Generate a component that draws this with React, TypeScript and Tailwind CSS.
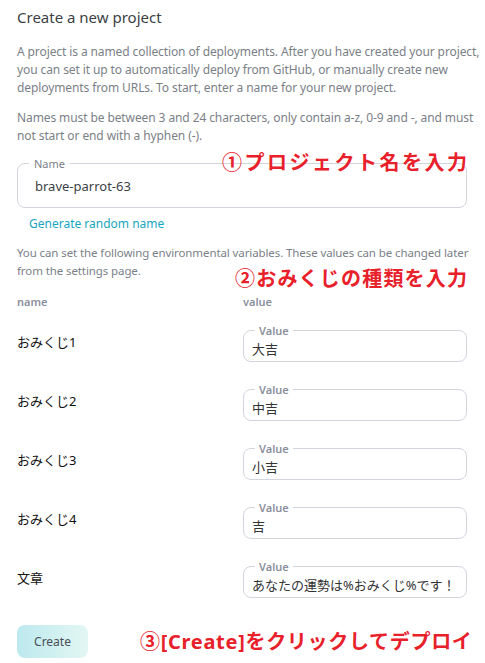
import React from "react";

const rows = [
  { name: "おみくじ1", value: "大吉" },
  { name: "おみくじ2", value: "中吉" },
  { name: "おみくじ3", value: "小吉" },
  { name: "おみくじ4", value: "吉" },
  { name: "文章", value: "あなたの運勢は%おみくじ%です！" },
];

const font = {
  fontFamily: '"Noto Sans", "Noto Sans CJK JP", sans-serif',
};

function ValueField({ value }: { value: string }) {
  return (
    <fieldset className="border border-[#d3d5dc] rounded-lg pb-[2px] min-w-0">
      <legend className="ml-[11px] px-[4px] text-[11px] leading-[13px] font-semibold text-[#8b909c]">
        Value
      </legend>
      <div className="mt-[2px] pl-[8px] text-[13px] leading-[20px] text-[#333]">{value}</div>
    </fieldset>
  );
}

export default function App() {
  return (
    <div className="relative w-[485px] h-[663px] bg-white overflow-hidden" style={font}>
      <div className="pl-[17px] pr-[4px] pt-[7px]">
        <h1 className="text-[15px] leading-[20px] text-[#3c3f46]">Create a new project</h1>

        <p className="mt-[16px] text-[12px] leading-[18px] tracking-[-0.1px] text-[#7b7f87] whitespace-nowrap">
          A project is a named collection of deployments. After you have created your project,
          <br />
          you can set it up to automatically deploy from GitHub, or manually create new
          <br />
          deployments from URLs. To start, enter a name for your new project.
        </p>

        <p className="mt-[12px] text-[12px] leading-[18px] tracking-[-0.1px] text-[#7b7f87] whitespace-nowrap">
          Names must be between 3 and 24 characters, only contain a-z, 0-9 and -, and must
          <br />
          not start or end with a hyphen (-).
        </p>

        <fieldset className="mt-[12px] w-[450px] border border-[#d3d5dc] rounded-lg pb-[11px]">
          <legend className="ml-[11px] px-[5px] text-[11px] leading-[13px] text-[#7b7f87]">Name</legend>
          <div className="mt-[6px] pl-[17px] text-[13px] leading-[20px] text-[#3c3f46]">brave-parrot-63</div>
        </fieldset>

        <button className="mt-[7px] ml-[12px] block text-[12px] leading-[18px] text-[#17a6c0]">
          Generate random name
        </button>

        <p className="mt-[11px] text-[11.5px] leading-[18px] tracking-[-0.1px] text-[#7b7f87] whitespace-nowrap">
          You can set the following environmental variables. These values can be changed later
          <br />
          from the settings page.
        </p>

        <div className="mt-[15px] grid grid-cols-[226px_224px] text-[11px] leading-[14px] font-semibold text-[#8b909c]">
          <div>name</div>
          <div>value</div>
        </div>

        <div className="mt-[15px] flex flex-col gap-[21px] w-[450px]">
          {rows.map((r) => (
            <div key={r.name} className="grid grid-cols-[226px_224px] items-center">
              <div className="text-[13px] text-[#111]">{r.name}</div>
              <ValueField value={r.value} />
            </div>
          ))}
        </div>

        <button className="mt-[27px] w-[71px] h-[33px] rounded-lg bg-gradient-to-r from-[#bde9ee] to-[#e2f7f3] text-[12px] text-[#4a4f57]">
          Create
        </button>
      </div>

      <div className="absolute left-[222px] top-[151px] whitespace-nowrap text-[20px] leading-[24px] font-bold tracking-[2.5px] text-[#e8202a]">
        ①プロジェクト名を入力
      </div>
      <div className="absolute left-[235px] top-[267px] whitespace-nowrap text-[20px] leading-[24px] font-bold tracking-[1.2px] text-[#e8202a]">
        ②おみくじの種類を入力
      </div>
      <div className="absolute left-[140px] top-[630px] whitespace-nowrap text-[20px] leading-[24px] font-bold tracking-[0.7px] text-[#e8202a]">
        ③[Create]をクリックしてデプロイ
      </div>
    </div>
  );
}
